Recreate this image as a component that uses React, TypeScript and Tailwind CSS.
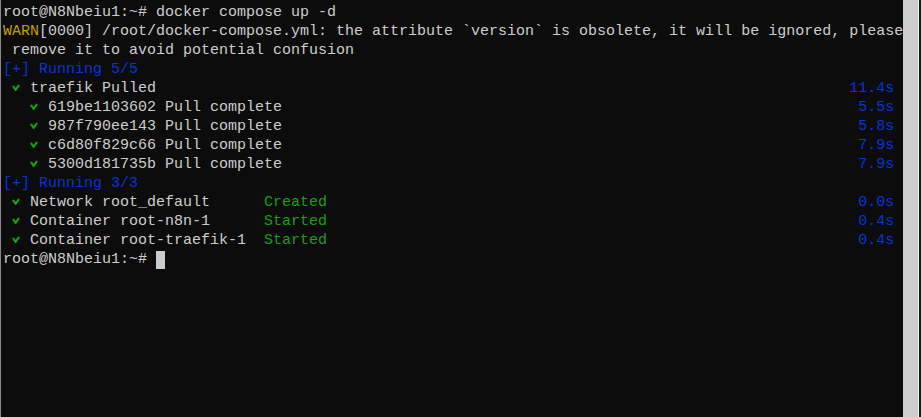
import React from 'react';

const COLS = 99;

function Check() {
    return (
        <span className="inline-block w-[9px] h-[19px] align-top">
            <svg width="9" height="19" viewBox="0 0 9 19">
                <path d="M1.4 7.6 L3.6 10.8 L6.6 6.6" fill="none" stroke="#13a10e" strokeWidth="2.1" strokeLinecap="round" strokeLinejoin="round" />
            </svg>
        </span>
    );
}

type Row = { indent: number; label: string; status?: string; time: string };

function StepRow({ indent, label, status, time }: Row) {
    // status column starts at col 29 like docker compose prints it
    const left = ' '.repeat(indent + 2) + label;
    const statusPart = status ? ' '.repeat(Math.max(1, 29 - left.length)) : '';
    const used = left.length + statusPart.length + (status ? status.length : 0);
    const gap = ' '.repeat(COLS - used - time.length);
    return (
        <div className="h-[19px] whitespace-pre">
            {' '.repeat(indent)}
            <Check />
            {' '}
            {label}
            {status && (
                <>
                    {statusPart}
                    <span className="text-[#13a10e]">{status}</span>
                </>
            )}
            {gap}
            <span className="text-[#0037da]">{time}</span>
        </div>
    );
}

function App() {
    const pulls: Row[] = [
        { indent: 3, label: '619be1103602 Pull complete', time: '5.5s' },
        { indent: 3, label: '987f790ee143 Pull complete', time: '5.8s' },
        { indent: 3, label: 'c6d80f829c66 Pull complete', time: '7.9s' },
        { indent: 3, label: '5300d181735b Pull complete', time: '7.9s' },
    ];
    const containers: Row[] = [
        { indent: 1, label: 'Network root_default', status: 'Created', time: '0.0s' },
        { indent: 1, label: 'Container root-n8n-1', status: 'Started', time: '0.4s' },
        { indent: 1, label: 'Container root-traefik-1', status: 'Started', time: '0.4s' },
    ];

    return (
        <div className="w-[921px] h-[417px] flex bg-[#0c0c0c] overflow-hidden">
            <div className="w-[1px] bg-[#8a8a8a]"></div>
            <div
                className="flex-1 pt-[3px] pl-[2px] text-[#cccccc] text-[15px] leading-[19px] overflow-hidden"
                style={{ fontFamily: '"Liberation Mono", "DejaVu Sans Mono", monospace' }}
            >
                <div className="h-[19px] whitespace-pre">root@N8Nbeiu1:~# docker compose up -d</div>
                <div className="h-[19px] whitespace-pre">
                    <span className="text-[#c19c00]">WARN</span>[0000] /root/docker-compose.yml: the attribute `version` is obsolete, it will be ignored, please
                </div>
                <div className="h-[19px] whitespace-pre"> remove it to avoid potential confusion</div>
                <div className="h-[19px] whitespace-pre text-[#0037da]">[+] Running 5/5</div>
                <StepRow indent={1} label="traefik Pulled" time="11.4s" />
                {pulls.map((p) => (
                    <StepRow key={p.label} {...p} />
                ))}
                <div className="h-[19px] whitespace-pre text-[#0037da]">[+] Running 3/3</div>
                {containers.map((c) => (
                    <StepRow key={c.label} {...c} />
                ))}
                <div className="h-[19px] whitespace-pre flex items-start">
                    <span>root@N8Nbeiu1:~# </span>
                    <span className="inline-block w-[9px] h-[18px] mt-[1px] bg-[#cccccc]"></span>
                </div>
            </div>
            <div className="w-[15px] bg-[#cdcdcd]"></div>
            <div className="w-[1px] bg-[#f0f0f0]"></div>
            <div className="w-[2px] bg-[#1a1a1a]"></div>
        </div>
    );
}

export default App;
